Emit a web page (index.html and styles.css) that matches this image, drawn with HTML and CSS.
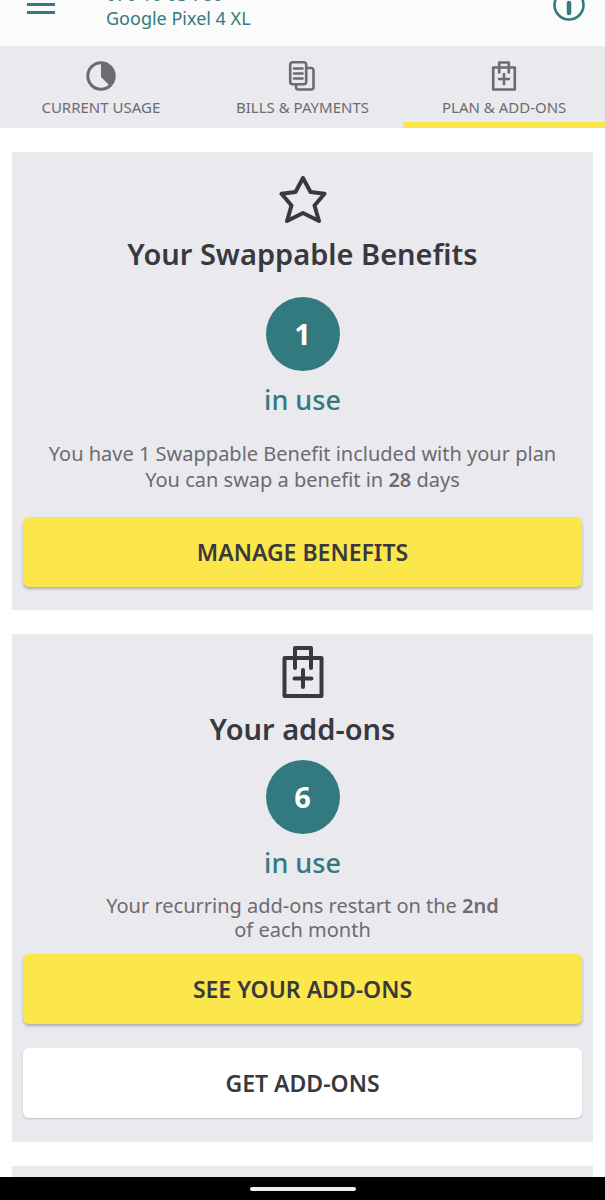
FILE: index.html
```html
<!DOCTYPE html>
<html lang="en">
<head>
<meta charset="utf-8">
<meta name="viewport" content="width=device-width, initial-scale=1">
<title>Plan &amp; add-ons</title>
<link rel="stylesheet" href="styles.css">
</head>
<body>
<header class="header">
  <button class="icon-button" type="button" aria-label="Menu">
    <svg width="28" height="22" viewBox="0 0 28 22" fill="none" stroke="currentColor" stroke-width="3"><path d="M0 4.500h28M0 12.500h28M0 20.500h28"/></svg>
  </button>
  <div class="account">
    <div>070 10 03 780</div>
    <div>Google Pixel 4 XL</div>
  </div>
  <button class="icon-button" type="button" aria-label="Information">
    <svg width="32" height="32" viewBox="0 0 32 32" fill="none" stroke="currentColor"><circle cx="16" cy="16" r="14.500" stroke-width="2.600"/><path d="M16 14v10" stroke-width="4.500" stroke-linecap="round"/><circle cx="16" cy="8" r="1" stroke-width="2"/></svg>
  </button>
</header>
<nav class="tabs">
  <a class="tab" href="#usage">
    <svg width="30" height="30" viewBox="0 0 30 30"><circle cx="15" cy="15" r="13.200" fill="none" stroke="currentColor" stroke-width="3"/><path d="M15 1.500A13.500 13.500 0 0 1 24 25L15 16Z" fill="currentColor"/></svg>
    <span>CURRENT USAGE</span>
  </a>
  <a class="tab" href="#bills">
    <svg width="30" height="30" viewBox="0 0 30 30" fill="none" stroke="currentColor" stroke-width="2.600" stroke-linejoin="round" stroke-linecap="round"><rect x="3.200" y="1.300" width="16" height="22" rx="2.500"/><path d="M7 7.500h8.500M7 12.500h8.500M7 17.500h8.500M20 7h4q2.500 0 2.500 2.500v16.500q0 2.500-2.500 2.500H11.500q-2.500 0-2.500-2.500v-2"/></svg>
    <span>BILLS &amp; PAYMENTS</span>
  </a>
  <a class="tab active" href="#plan" aria-current="page">
    <svg width="30" height="30" viewBox="0 0 30 30" fill="none" stroke="currentColor" stroke-width="2.600" stroke-linejoin="round"><path d="M4.200 6.500h21.600v22H4.200zM10.200 12.500V1.500h9.600v11M9 18h12M15 12v12"/></svg>
    <span>PLAN &amp; ADD-ONS</span>
  </a>
</nav>
<main class="content" id="plan">
  <section class="card benefits">
    <svg class="card-icon" width="48" height="48" viewBox="0 0 48 48" fill="none" stroke="currentColor" stroke-width="4" stroke-linejoin="round"><path d="M24 2L31.500 16 45.500 17.800 35.500 29.500 40 45 24 37 8 45 12.500 29.500 2.500 17.800 16.500 16Z"/></svg>
    <h2 class="title">Your Swappable Benefits</h2>
    <div class="count">1</div>
    <div class="in-use">in use</div>
    <p class="note">You have 1 Swappable Benefit included with your plan<br>You can swap a benefit in <b>28</b> days</p>
    <button class="button primary" type="button">MANAGE BENEFITS</button>
  </section>
  <section class="card addons">
    <svg class="card-icon" width="42" height="52" viewBox="0 0 42 52" fill="none" stroke="currentColor" stroke-width="4" stroke-linejoin="round" stroke-linecap="round"><path d="M2.500 12h37v38h-37zM13 22V2h16v20M12.500 32.500h17M21 24v17"/></svg>
    <h2 class="title">Your add-ons</h2>
    <div class="count">6</div>
    <div class="in-use">in use</div>
    <p class="note">Your recurring add-ons restart on the <b>2nd</b><br>of each month</p>
    <button class="button primary" type="button">SEE YOUR ADD-ONS</button>
    <button class="button secondary" type="button">GET ADD-ONS</button>
  </section>
  <section class="card"></section>
</main>
<footer class="system-bar"><div class="handle"></div></footer>
</body>
</html>
```
FILE: styles.css
```css
* { box-sizing: border-box; }
body {
  margin: 0;
  height: 100vh;
  display: flex;
  flex-direction: column;
  overflow: hidden;
  background: #fff;
  color: #38393e;
  font-family: "Noto Sans", sans-serif;
}
button { font: inherit; color: inherit; border: 0; cursor: pointer; }
.header {
  flex: none;
  height: 46px;
  padding: 0 20px 0 27px;
  display: flex;
  align-items: flex-end;
  background: #fbfbfb;
  color: #337a80;
  overflow: hidden;
}
.icon-button {
  display: flex;
  padding: 0;
  margin-bottom: 25px;
  background: none;
}
.icon-button:first-child { margin-bottom: 32px; }
.account {
  flex: 1;
  padding: 0 0 16px 51px;
  font-size: 18px;
  line-height: 24px;
}
.tabs {
  flex: none;
  display: grid;
  grid-template-columns: repeat(3, 1fr);
  height: 82px;
  background: #eae9ee;
}
.tab {
  display: flex;
  flex-direction: column;
  align-items: center;
  gap: 6px;
  padding-top: 15px;
  border-bottom: 6px solid transparent;
  color: #6c6b71;
  font-size: 15px;
  line-height: 20px;
  text-decoration: none;
  white-space: nowrap;
}
.tab svg { flex: none; }
.active { border-color: #fbe64b; }
.content {
  flex: 1;
  min-height: 0;
  overflow: hidden;
  display: flex;
  flex-direction: column;
  gap: 24px;
  padding: 24px 12px 0;
}
.card {
  flex: none;
  display: flex;
  flex-direction: column;
  align-items: center;
  min-height: 48px;
  padding: 12px 11px 23px;
  background: #eae9ee;
}
.benefits { padding-top: 24px; }
.title {
  margin: 11px 0;
  font-size: 29px;
  line-height: 40px;
  font-weight: 600;
}
.benefits .title { margin: 10px 0 23px; }
.count {
  width: 74px;
  height: 74px;
  display: grid;
  place-items: center;
  border-radius: 50%;
  background: #337a80;
  color: #fff;
  font-size: 29px;
  line-height: 40px;
  font-weight: 700;
}
.in-use {
  margin: 11px 0 13px;
  color: #337a80;
  font-size: 27px;
  line-height: 36px;
  font-weight: 500;
}
.benefits .in-use { margin-bottom: 23px; }
.note {
  margin: 0 0 12px;
  color: #6c6b71;
  font-size: 20px;
  line-height: 24px;
  text-align: center;
}
.benefits .note { margin-bottom: 24px; line-height: 26px; }
.note b { font-weight: 600; }
.button {
  width: 100%;
  height: 70px;
  border-radius: 6px;
  font-size: 23px;
  font-weight: 600;
  box-shadow: 0 2px 3px #0004;
}
.primary { background: #fbe64b; }
.secondary { margin-top: 24px; background: #fff; box-shadow: 0 1px 2px #0003; }
.addons { padding-bottom: 24px; }
.system-bar {
  flex: none;
  height: 23px;
  display: grid;
  place-items: center;
  background: #000;
}
.handle {
  width: 106px;
  height: 4px;
  border-radius: 2px;
  background: #eee;
}
```
